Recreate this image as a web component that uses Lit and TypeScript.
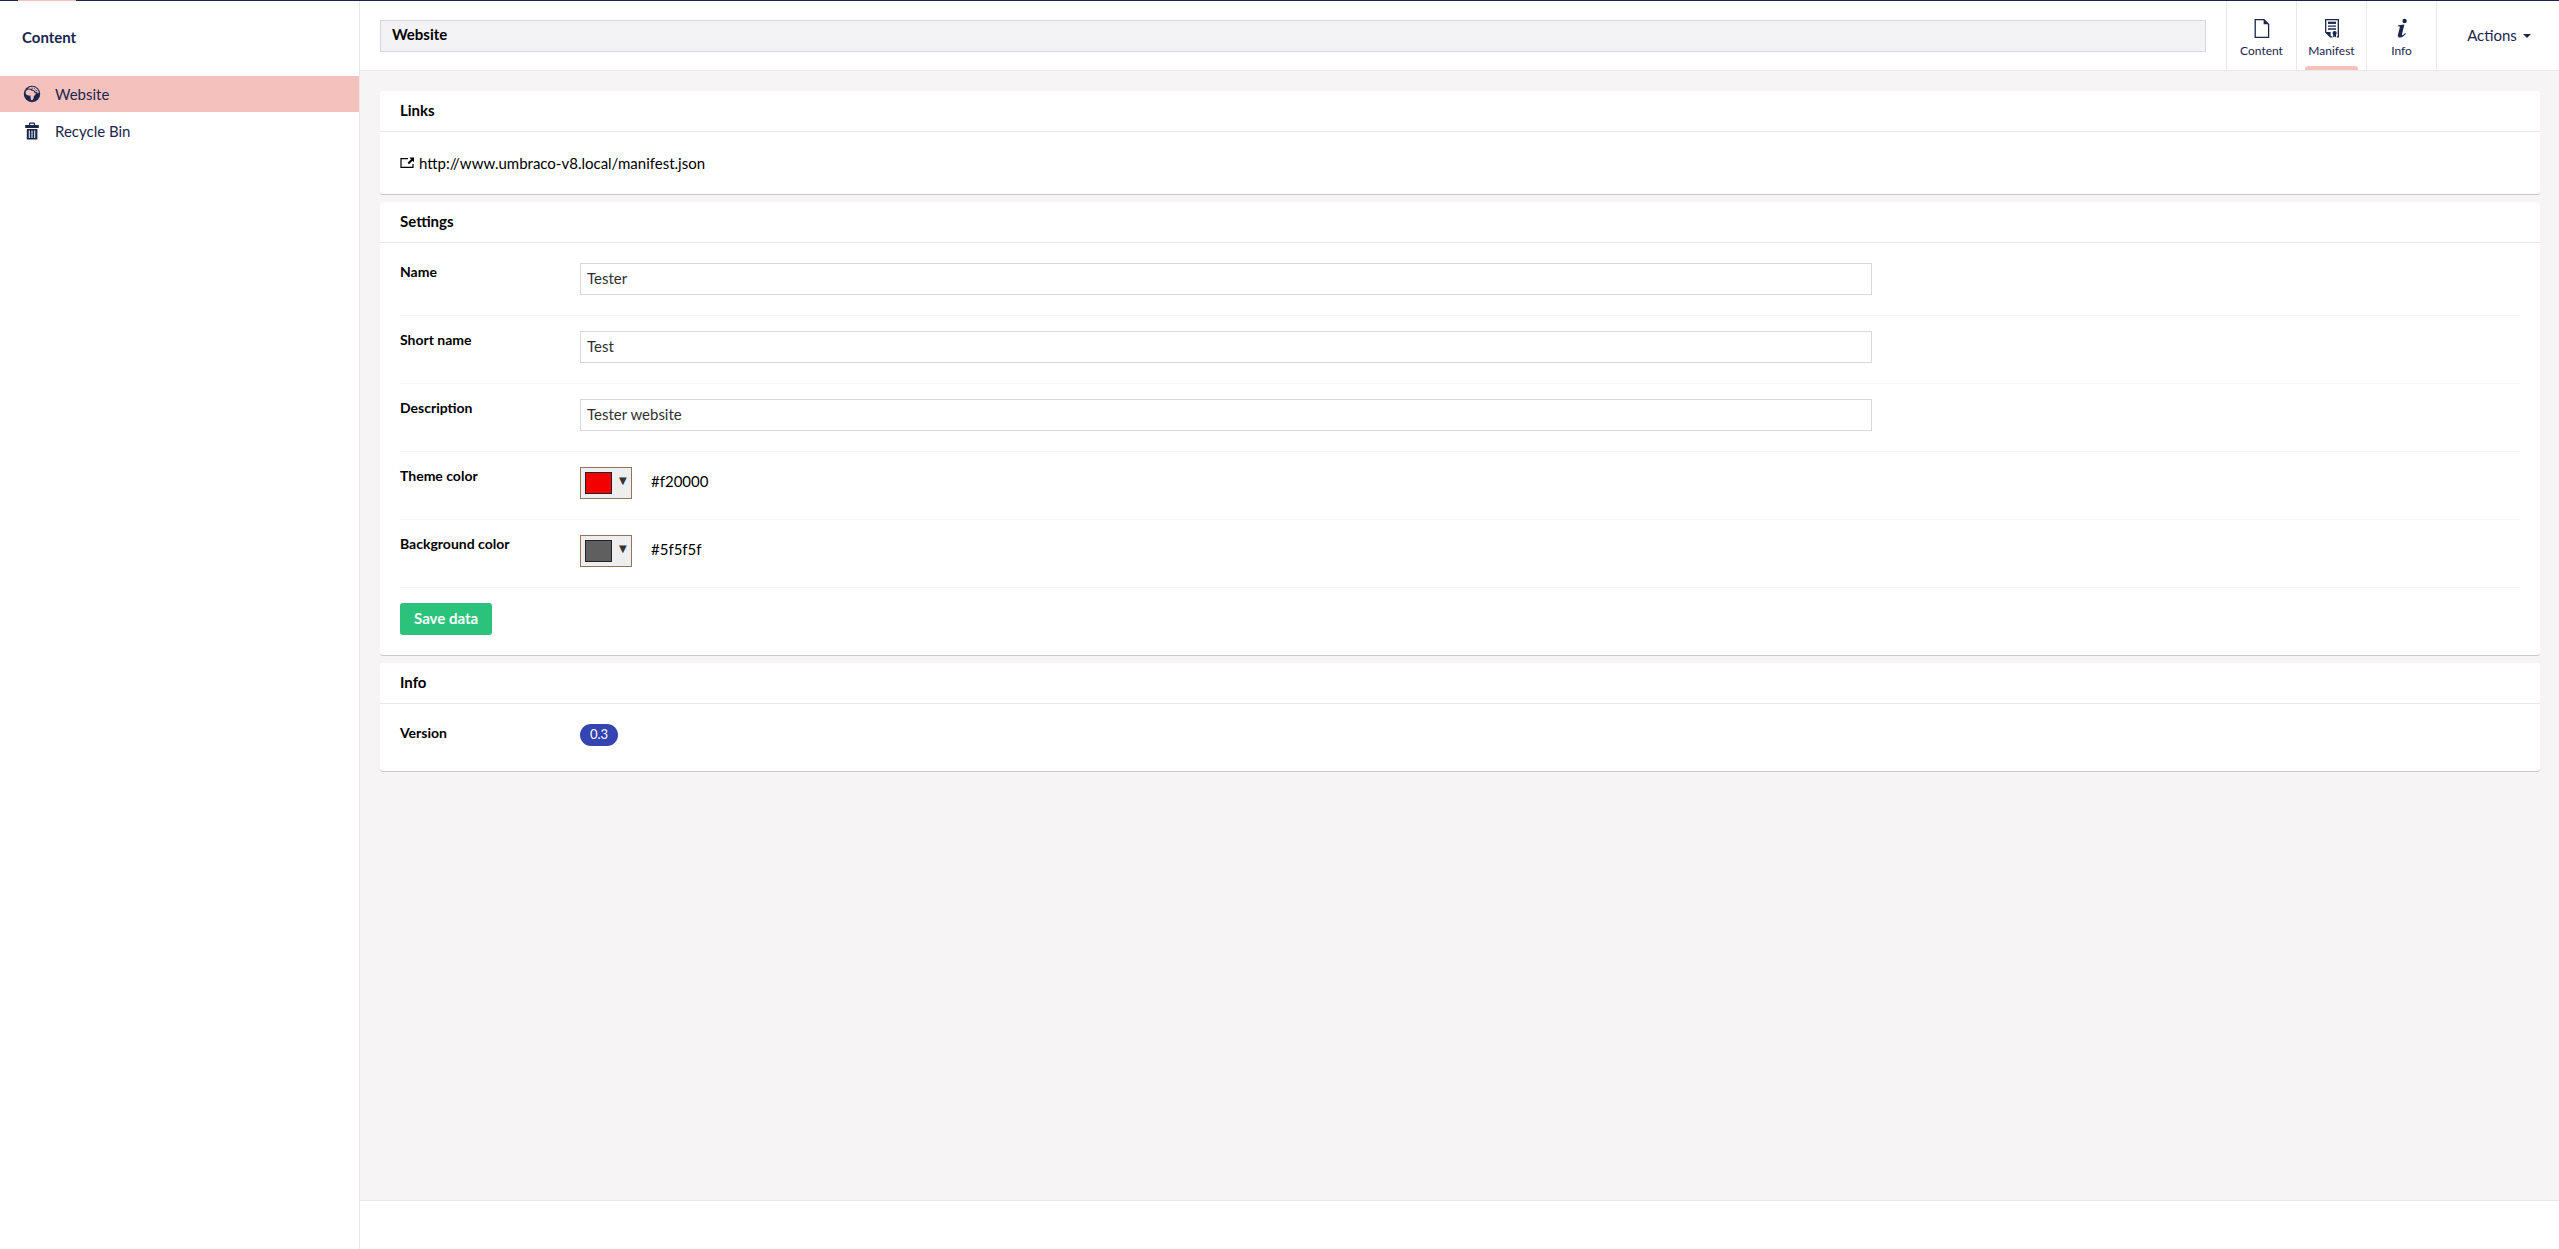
import { LitElement, html, css, svg } from "lit";
import { customElement } from "lit/decorators.js";
import { styleMap } from "lit/directives/style-map.js";

const globe = svg`<circle cx="9" cy="9" r="8.2" fill="currentColor"/>
  <path class="land" d="M2.4 7.4 3.4 5.6 5.2 4.6 7.4 4.8 8.6 5.8 10.6 6 11.6 8 13.2 8.2 12 10 10.8 11.2 10.8 12.8 9.4 15.2 8 15 7.6 12.6 7.4 10.6 5.4 10.4 3.4 9.8Z"/>
  <path class="land" d="M4.6 3.6 7 2 10 1.7 12.8 2.8 15 5 15.9 7.8 14.8 8.6 14 7 12.8 7.2 11.4 5.4 9.6 4.8 8.4 3.8Z"/>
  <path d="M8.6 3 10 3.4M11.2 3.2 12.2 4.4M12.6 5.4 14.2 5.8" stroke="currentColor" stroke-width=".8" fill="none"/>`;

const trash = svg`<path fill="currentColor" fill-rule="evenodd" d="M2.2 3H6V1.6Q6 .4 7.2.4H10.8Q12 .4 12 1.6V3H15.8V6H2.2ZM7.2 1.8V3H10.8V1.8ZM3.8 7H14.4V17.6H3.8ZM5.8 8.6V16H6.8V8.6ZM8.5 8.6V16H9.5V8.6ZM11.2 8.6V16H12.2V8.6Z"/>`;

const page = svg`<path d="M3.2 1.6H12L16.6 6.2V19.4H3.2Z" fill="none" stroke="currentColor" stroke-width="1.3"/>
  <path d="M11.6 1.5V6.2H16.6Z" fill="currentColor"/>`;

const manifest = svg`<path d="M10.4 18.9H8.4L3.7 14.2V1.6H16.3V18.9H14.8" fill="none" stroke="currentColor" stroke-width="1.3"/>
  <path d="M6 4.8H14" stroke="currentColor" stroke-width="2.2"/>
  <path d="M6 8.2H14M6 11H14" stroke="currentColor" stroke-width="1.3"/>
  <path d="M3.4 14H8.6V19.2Z" fill="currentColor"/>
  <circle cx="12.6" cy="15" r="2.1" fill="currentColor"/>
  <path d="M11.2 16H14V19.6L12.6 18.6 11.2 19.6Z" fill="currentColor"/>`;

const info = svg`<circle cx="12.6" cy="3" r="2.2" fill="currentColor"/>
  <path fill="currentColor" d="M6.2 7.2 12.4 6.4 10 16.2Q9.6 17.8 10.8 17.2L13.2 15 13.8 15.7Q11.2 19.4 8.2 19.5 5.2 19.5 6 16.4L7.8 9.6Q8 8.2 7 8.2L5.6 8.3Z"/>`;

const external = svg`<path d="M8 1.6H1V10.4H13V7" fill="none" stroke="currentColor" stroke-width="1.2"/>
  <path d="M9.4.6H14V5.2L12.5 3.7 9 7.2 7.6 5.8 11.1 2.3Z" fill="currentColor"/>`;

@customElement("app-root")
export class AppRoot extends LitElement {
  static styles = css`
    :host {
      display: flex;
      flex-direction: column;
      min-height: 100vh;
      background: #fff;
      color: #000;
      font: 15px/20px Lato, "Open Sans", sans-serif;
    }
    * { box-sizing: border-box; }
    h1, h2, ul { margin: 0; padding: 0; font-size: 15px; }
    ul { list-style: none; }
    a { color: inherit; text-decoration: none; }
    button, input { font: inherit; margin: 0; border-radius: 0; }
    svg { display: block; flex: none; }
    .topbar { height: 1px; padding-left: 18px; background: #1b264f; }
    .marker { width: 58px; height: 1px; background: #f5c1bc; }
    .shell { display: flex; flex: 1; }
    .sidebar { width: 360px; border-right: 1px solid #e9e9eb; color: #1b264f; }
    .title { padding: 26px 22px 29px; }
    .tree { display: grid; gap: 1px; }
    .node { display: flex; align-items: center; gap: 14px; height: 36px; padding-left: 23px; }
    .node.active { background: #f5c1bc; }
    .land { fill: #f5c1bc; }
    .editor { display: flex; flex-direction: column; flex: 1; min-width: 0; background: #f6f4f4; }
    .header { display: flex; height: 70px; border-bottom: 1px solid #e9e9eb; background: #fff; }
    .name { flex: 1; min-width: 0; height: 32px; margin: 19px 20px 0; padding: 0 11px 4px; border: 1px solid #d8d7d9; background: #f3f3f5; color: #000; font-weight: 700; }
    .tabs { display: flex; border-right: 1px solid #e9e9eb; }
    .tab { display: flex; flex-direction: column; align-items: center; width: 70px; padding: 17px 0 0; border: 0; border-left: 1px solid #e9e9eb; background: none; color: #1b264f; font-size: 12px; line-height: 16px; }
    .tab svg { margin-bottom: 5px; }
    .tab::after { content: ""; width: 53px; height: 4px; margin-top: auto; border-radius: 3px 3px 0 0; }
    .tab.active::after { background: #f5c1bc; }
    .actions { display: flex; align-items: center; justify-content: center; gap: 6px; width: 122px; padding: 0 0 2px 2px; border: 0; background: none; color: #1b264f; }
    .caret { border: 4px solid transparent; border-top-color: currentColor; border-bottom: 0; margin-top: 2px; }
    .content { display: grid; align-content: start; gap: 8px; flex: 1; padding: 20px 19px 20px 20px; }
    .card { border-radius: 3px; background: #fff; box-shadow: 0 1px 0 rgba(0, 0, 0, 0.18); }
    .card h2 { padding: 9px 20px 11px; border-bottom: 1px solid #e9e9eb; }
    .body { padding: 20px; }
    .links { padding: 21px 20px; }
    .link { display: inline-flex; align-items: center; gap: 4px; vertical-align: top; }
    .row { display: flex; min-height: 32px; }
    .field { padding-bottom: 20px; margin-bottom: 15px; border-bottom: 1px solid #f6f6f7; box-sizing: content-box; }
    .label { width: 180px; flex: none; font-size: 14px; font-weight: 700; line-height: 18px; }
    .control { display: flex; flex: 1; align-items: flex-start; }
    .text { width: 66.6%; height: 32px; padding: 0 6px 2px; border: 1px solid #d8d7d9; background: #fff; color: #303033; }
    .picker { display: flex; align-items: center; gap: 7px; width: 52px; height: 32px; padding: 0 4px; border: 1px solid #91765d; background: #eee; color: #333; }
    .swatch { width: 27px; height: 22px; border: 1px solid #222; }
    .arrow { font: 10px/16px "DejaVu Sans", sans-serif; margin-bottom: 4px; }
    .hex { padding: 4px 0 0 19px; }
    .save { display: block; height: 32px; padding: 0 14px 2px; border: 0; border-radius: 3px; background: #2bc37c; color: #fff; font-weight: 700; }
    .info { padding-bottom: 15px; }
    .badge { padding: 0 10px 1px; border-radius: 11px; background: #3544b1; color: #fff; font-size: 13px; line-height: 21px; }
    .footer { height: 49px; border-top: 1px solid #e9e9eb; background: #fff; }
  `;

  private icon(shape: unknown, w: number, h: number) {
    return html`<svg width=${w} height=${h} viewBox="0 0 ${w} ${h}" aria-hidden="true">${shape}</svg>`;
  }

  private textRow(id: string, label: string, value: string) {
    return html`<div class="row field">
      <label class="label" for=${id}>${label}</label>
      <div class="control"><input class="text" id=${id} type="text" .value=${value} /></div>
    </div>`;
  }

  private colorRow(id: string, label: string, value: string) {
    return html`<div class="row field">
      <label class="label" for=${id}>${label}</label>
      <div class="control">
        <button class="picker" id=${id} type="button">
          <span class="swatch" style=${styleMap({ background: value })}></span>
          <span class="arrow">▼</span>
        </button>
        <span class="hex">${value}</span>
      </div>
    </div>`;
  }

  render() {
    return html`
      <div class="topbar"><div class="marker"></div></div>
      <div class="shell">
        <nav class="sidebar">
          <h1 class="title">Content</h1>
          <ul class="tree">
            <li><a class="node active" href="#website">${this.icon(globe, 18, 18)}Website</a></li>
            <li><a class="node" href="#recycle-bin">${this.icon(trash, 18, 18)}Recycle Bin</a></li>
          </ul>
        </nav>
        <main class="editor">
          <header class="header">
            <input class="name" type="text" aria-label="Name of page" .value=${"Website"} />
            <div class="tabs">
              <button class="tab" type="button">${this.icon(page, 20, 20)}Content</button>
              <button class="tab active" type="button">${this.icon(manifest, 20, 20)}Manifest</button>
              <button class="tab" type="button">${this.icon(info, 20, 20)}Info</button>
            </div>
            <button class="actions" type="button">Actions<span class="caret"></span></button>
          </header>
          <div class="content">
            <section class="card">
              <h2>Links</h2>
              <div class="body links">
                <a class="link" href="http://www.umbraco-v8.local/manifest.json">${this.icon(external, 15, 12)}http://www.umbraco-v8.local/manifest.json</a>
              </div>
            </section>
            <section class="card">
              <h2>Settings</h2>
              <form class="body">
                ${this.textRow("name", "Name", "Tester")}
                ${this.textRow("short-name", "Short name", "Test")}
                ${this.textRow("description", "Description", "Tester website")}
                ${this.colorRow("theme-color", "Theme color", "#f20000")}
                ${this.colorRow("background-color", "Background color", "#5f5f5f")}
                <button class="save" type="button">Save data</button>
              </form>
            </section>
            <section class="card">
              <h2>Info</h2>
              <div class="body info">
                <div class="row">
                  <span class="label">Version</span>
                  <div class="control"><span class="badge">0.3</span></div>
                </div>
              </div>
            </section>
          </div>
          <footer class="footer"></footer>
        </main>
      </div>
    `;
  }
}
